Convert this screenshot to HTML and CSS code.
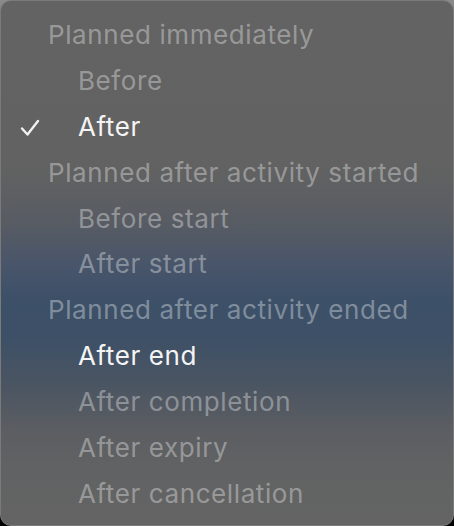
FILE: index.html
```html
<!DOCTYPE html>
<html>
<head>
<meta charset="utf-8">
<link rel="stylesheet" href="styles.css">
</head>
<body>
<div class="menu">
  <div class="row header">Planned immediately</div>
  <div class="row item disabled">Before</div>
  <div class="row item checked"><svg class="check" width="20" height="18" viewBox="0 0 20 18"><path d="M2 9.5 L7.5 15.5 L18 2" fill="none" stroke="#f2f2f2" stroke-width="2.4" stroke-linecap="round" stroke-linejoin="round"/></svg>After</div>
  <div class="row header">Planned after activity started</div>
  <div class="row item disabled">Before start</div>
  <div class="row item disabled">After start</div>
  <div class="row header">Planned after activity ended</div>
  <div class="row item">After end</div>
  <div class="row item disabled">After completion</div>
  <div class="row item disabled">After expiry</div>
  <div class="row item disabled">After cancellation</div>
</div>
</body>
</html>
```
FILE: styles.css
```css
html, body {
  margin: 0;
  padding: 0;
  width: 454px;
  height: 526px;
  overflow: hidden;
  background: linear-gradient(to bottom, #8a8a8a 0, #555 50%, #000 100%);
}
.menu {
  box-sizing: border-box;
  width: 454px;
  height: 526px;
  border-radius: 11px;
  border: 1px solid #7a7a7a;
  padding: 11px 0 9px;
  display: flex;
  flex-direction: column;
  font-family: Inter, "Noto Sans", sans-serif;
  font-size: 26px;
  letter-spacing: 0.6px;
  background: linear-gradient(to bottom,
    #636363 0px,
    #626262 165px,
    #585c63 220px,
    #48556a 265px,
    #3c5068 300px,
    #3d5067 335px,
    #4b5562 385px,
    #5a5d62 425px,
    #616263 465px,
    #646464 526px);
}
.row {
  height: 46px;
  display: flex;
  align-items: center;
  position: relative;
  white-space: nowrap;
}
.header {
  padding-left: 47px;
  color: rgba(255, 255, 255, 0.36);
}
.item {
  padding-left: 77px;
  color: #f4f4f4;
}
.item.disabled {
  color: rgba(255, 255, 255, 0.36);
}
.check {
  position: absolute;
  left: 19px;
  top: 15px;
}
```
